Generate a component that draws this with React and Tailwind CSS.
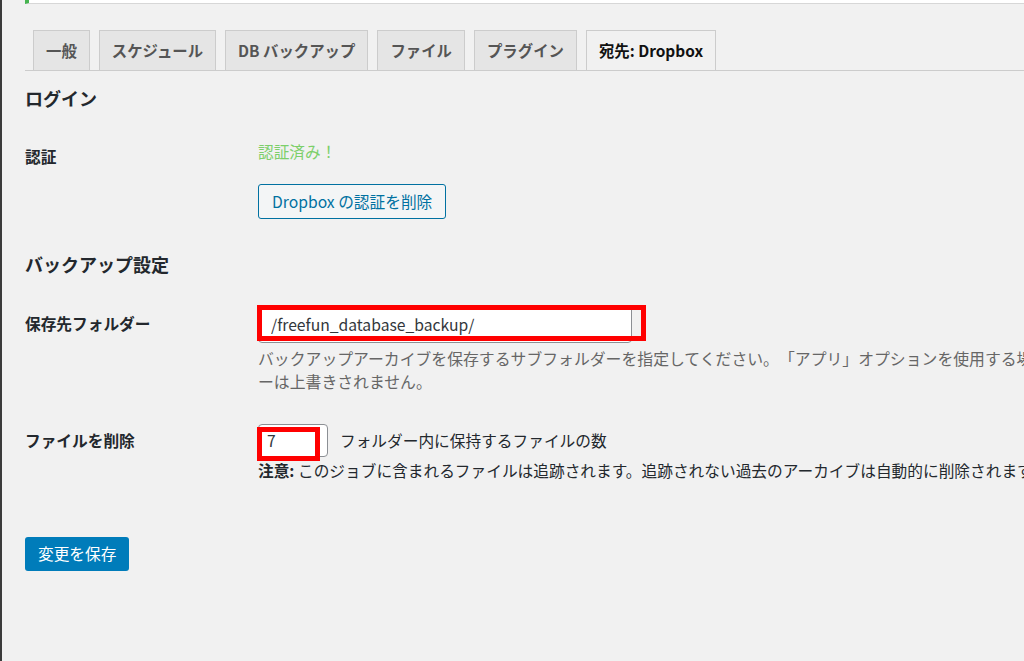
import React from "react";

const tabs = [
  { label: "一般" },
  { label: "スケジュール" },
  { label: "DB バックアップ" },
  { label: "ファイル" },
  { label: "プラグイン" },
  { label: "宛先: Dropbox", active: true },
];

export default function App() {
  return (
    <div className="h-screen w-full overflow-hidden bg-[#f1f1f1] border-l-2 border-[#3b3b3b] font-['Noto_Sans_CJK_JP','Noto_Sans',sans-serif] text-[#23282d] [text-spacing-trim:space-all]">
      <div className="w-[1250px] pl-[23px]">
        {/* notice box cut off at the top */}
        <div className="h-[4px] bg-white border-l-4 border-[#46b450] border-b border-b-[#d7d7d7]" />

        {/* Tabs */}
        <div className="mt-[26px] flex gap-[9px] pl-[8px] border-b border-[#cccccc]">
          {tabs.map((t) => (
            <div
              key={t.label}
              className={
                t.active
                  ? "h-[40px] px-[12px] flex items-center border border-b-0 border-[#cccccc] bg-[#f1f1f1] text-[15.4px] font-semibold text-[#111]"
                  : "h-[40px] px-[12px] flex items-center border border-b-0 border-[#cccccc] bg-[#e5e5e5] text-[15.4px] font-semibold text-[#555]"
              }
            >
              {t.label}
            </div>
          ))}
        </div>

        {/* ログイン */}
        <h2 className="mt-[15px] text-[18px] leading-[24px] font-bold">ログイン</h2>

        <div className="mt-[30px] flex">
          <div className="w-[233px] pt-[5px] text-[15.7px] leading-[24px] font-bold">認証</div>
          <div>
            <p className="text-[15.7px] leading-[24px] text-[#7ccf6a]">認証済み！</p>
            <button className="mt-[20px] h-[35px] px-[13px] rounded-[3px] border border-[#0071a1] bg-[#f3f5f6] text-[15.7px] text-[#0071a1]">
              Dropbox の認証を削除
            </button>
          </div>
        </div>

        {/* バックアップ設定 */}
        <h2 className="mt-[33px] text-[18px] leading-[24px] font-bold">バックアップ設定</h2>

        <div className="mt-[30px] flex">
          <div className="w-[233px] pt-[6px] text-[15.7px] leading-[24px] font-bold">保存先フォルダー</div>
          <div className="w-[912px]">
            <div className="relative w-[374px]">
              <input
                type="text"
                readOnly
                value="/freefun_database_backup/"
                className="w-[374px] h-[37px] px-[12px] rounded-[4px] border border-[#8c8f94] bg-white text-[15.7px] text-[#32373c] outline-none"
              />
              <div className="absolute left-[-1px] top-[-1px] w-[389px] h-[36px] border-[5px] border-[#ff0000] pointer-events-none" />
            </div>
            <p className="mt-[4px] text-[15.85px] leading-[23px] text-[#666] [line-break:loose]">
              バックアップアーカイブを保存するサブフォルダーを指定してください。「アプリ」オプションを使用する場合、このフォルダーは上書きされません。
            </p>
          </div>
        </div>

        <div className="mt-[31px] flex">
          <div className="w-[233px] pt-[5px] text-[15.7px] leading-[24px] font-bold">ファイルを削除</div>
          <div className="w-[912px]">
            <div className="flex items-center">
              <div className="relative">
                <input
                  type="text"
                  readOnly
                  value="7"
                  className="w-[70px] h-[33px] px-[8px] rounded-[4px] border border-[#8c8f94] bg-white text-[15.7px] text-[#32373c] outline-none"
                />
                <div className="absolute left-[-1px] top-[3px] w-[63px] h-[34px] border-[5px] border-[#ff0000] pointer-events-none" />
              </div>
              <span className="ml-[12px] text-[15.7px] leading-[24px] text-[#23282d]">
                フォルダー内に保持するファイルの数
              </span>
            </div>
            <p className="mt-[2px] text-[15.7px] leading-[23px] text-[#23282d] whitespace-nowrap">
              <strong className="font-bold">注意:</strong> このジョブに含まれるファイルは追跡されます。追跡されない過去のアーカイブは自動的に削除されます。
            </p>
          </div>
        </div>

        <button className="mt-[55px] h-[34px] px-[13px] rounded-[3px] bg-[#007cba] text-white text-[15.7px]">
          変更を保存
        </button>
      </div>
    </div>
  );
}
